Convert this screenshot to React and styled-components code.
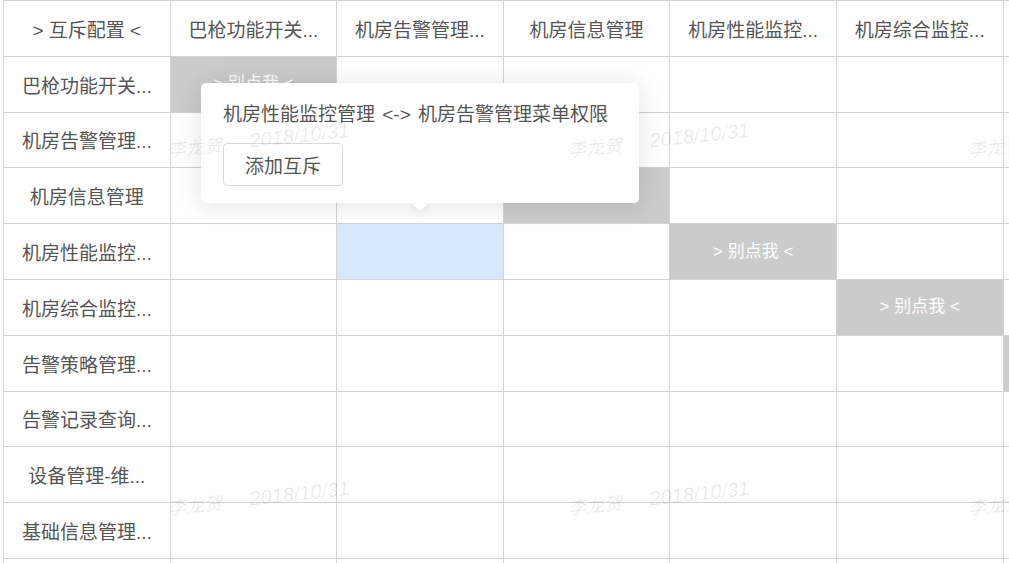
import React, { useState } from 'react';
import styled, { createGlobalStyle } from 'styled-components';

const GlobalStyle = createGlobalStyle`
  html, body {
    margin: 0;
    padding: 0;
    background: #fff;
    overflow: hidden;
  }
  body {
    font-family: 'Liberation Sans', 'Noto Sans CJK SC', sans-serif;
  }
`;

const Page = styled.div`
  position: relative;
  width: 100vw;
  height: 100vh;
  overflow: hidden;
`;

const Matrix = styled.div`
  display: grid;
  grid-template-columns: repeat(${props => props.$cols}, 166.6px);
  grid-auto-rows: 55.8px;
  margin-left: 3px;
  width: max-content;
  border-top: 1px solid #d3d3d3;
  border-left: 1px solid #d3d3d3;
`;

const tones = {
  plain: { bg: '#fff', color: '#555', size: '19px' },
  self: { bg: '#cbcbcb', color: '#fff', size: '17px' },
  active: { bg: '#d6e8fc', color: '#555', size: '19px' },
};

const Cell = styled.div`
  box-sizing: border-box;
  display: flex;
  align-items: center;
  justify-content: center;
  padding-bottom: ${props => (props.$tone === 'self' ? '5px' : '0')};
  border-right: 1px solid #d3d3d3;
  border-bottom: 1px solid #d3d3d3;
  background: ${props => tones[props.$tone].bg};
  color: ${props => tones[props.$tone].color};
  font-size: ${props => tones[props.$tone].size};
  white-space: nowrap;
  cursor: ${props => (props.$label ? 'default' : 'pointer')};
  position: ${props => (props.$open ? 'relative' : 'static')};
  z-index: ${props => (props.$open ? 5 : 'auto')};
`;

const Popover = styled.div`
  position: absolute;
  left: 50%;
  bottom: calc(100% + 21px);
  transform: translateX(-50%);
  width: 438px;
  box-sizing: border-box;
  padding: 20px 22px 17px;
  background: #fff;
  border-radius: 5px;
  box-shadow: 0 2px 26px rgba(0, 0, 0, 0.12);
  cursor: default;

  &::after {
    content: '';
    position: absolute;
    left: 50%;
    bottom: -6px;
    width: 12px;
    height: 12px;
    margin-left: -6px;
    background: #fff;
    transform: rotate(45deg);
    box-shadow: 3px 3px 6px rgba(0, 0, 0, 0.06);
  }
`;

const PopTitle = styled.div`
  font-size: 19px;
  line-height: 24px;
  color: #555;
  word-spacing: 2px;
  white-space: nowrap;
`;

const AddButton = styled.button`
  margin-top: 16px;
  height: 43px;
  padding: 0 21px;
  border: 1px solid #d9d9d9;
  border-radius: 4px;
  background: #fff;
  color: #555;
  font-family: inherit;
  font-size: 19px;
  cursor: pointer;
`;

const Watermark = styled.div`
  position: absolute;
  inset: 0;
  z-index: 20;
  pointer-events: none;
`;

const Mark = styled.div`
  position: absolute;
  display: flex;
  align-items: center;
  gap: 28px;
  line-height: 20px;
  color: rgba(0, 0, 0, 0.09);
  font-style: italic;
  white-space: nowrap;
  transform: rotate(-6deg);
  transform-origin: left center;

  & > span:first-child {
    font-family: 'Noto Sans CJK SC', sans-serif;
    font-size: 18px;
  }
  & > span:last-child {
    font-family: 'Liberation Sans', sans-serif;
    font-size: 20px;
  }
`;

const items = [
  '巴枪功能开关管理',
  '机房告警管理菜单权限',
  '机房信息管理',
  '机房性能监控管理',
  '机房综合监控管理',
  '告警策略管理菜单',
  '告警记录查询菜单',
  '设备管理-维护',
  '基础信息管理菜单',
  '系统设置管理菜单',
];

const short = name => (name.length > 6 ? name.slice(0, 6) + '...' : name);

const marks = [];
for (let j = 0; j < 2; j++) {
  for (let i = -1; i < 3; i++) {
    marks.push({ left: 168 + i * 400, top: 139 + j * 358 });
  }
}

export default function App() {
  const [hover, setHover] = useState({ row: 3, col: 1 });

  return (
    <Page>
      <GlobalStyle />
      <Matrix $cols={items.length + 1}>
        <Cell $tone="plain" $label>&gt; 互斥配置 &lt;</Cell>
        {items.map(name => (
          <Cell key={'h' + name} $tone="plain" $label>
            {short(name)}
          </Cell>
        ))}
        {items.map((rowName, row) => (
          <React.Fragment key={rowName}>
            <Cell $tone="plain" $label>{short(rowName)}</Cell>
            {items.map((colName, col) => {
              const open = hover && hover.row === row && hover.col === col && row !== col;
              const tone = row === col ? 'self' : open ? 'active' : 'plain';
              return (
                <Cell
                  key={colName}
                  $tone={tone}
                  $open={open}
                  onMouseEnter={() => row !== col && setHover({ row, col })}
                >
                  {row === col && '> 别点我 <'}
                  {open && (
                    <Popover>
                      <PopTitle>
                        {rowName} &lt;-&gt; {colName}
                      </PopTitle>
                      <AddButton>添加互斥</AddButton>
                    </Popover>
                  )}
                </Cell>
              );
            })}
          </React.Fragment>
        ))}
      </Matrix>
      <Watermark>
        {marks.map((m, k) => (
          <Mark key={k} style={{ left: m.left, top: m.top }}>
            <span>李龙贺</span>
            <span>2018/10/31</span>
          </Mark>
        ))}
      </Watermark>
    </Page>
  );
}
